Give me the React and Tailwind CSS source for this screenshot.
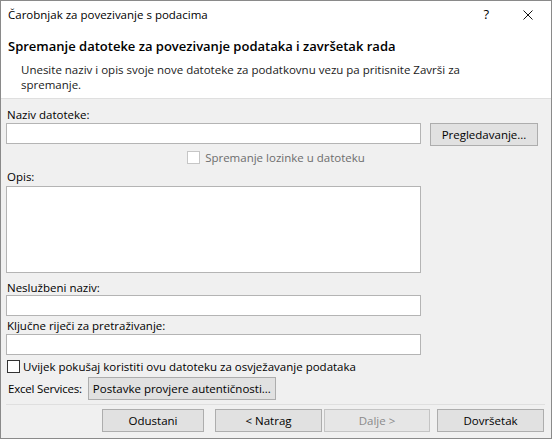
const FONT = "font-['Segoe_UI','Open_Sans',sans-serif]";

function TextBox({ h = 'h-[21px]' }) {
  return <div className={`w-[415px] shrink-0 ${h} bg-white border border-[#b4b4b4]`} />;
}

function Btn({ children, w, disabled, className = '' }) {
  return (
    <div
      className={`${w} h-[23px] shrink-0 whitespace-nowrap flex items-center justify-center border ${
        disabled ? 'border-[#c4c4c4] bg-[#e6e6e6] text-[#8a8a8a]' : 'border-[#adadad] bg-[#e1e1e1] text-black'
      } ${className}`}
    >
      {children}
    </div>
  );
}

function Check({ disabled }) {
  return (
    <div
      className={`w-[13px] h-[13px] shrink-0 bg-white border ${disabled ? 'border-[#c6c6c6]' : 'border-[#333333]'}`}
    />
  );
}

export default function App() {
  return (
    <div className={`w-[552px] h-[439px] border border-[#8a8a8a] bg-[#f0f0f0] flex flex-col text-[11.5px] leading-[15px] text-black ${FONT}`}>
      {/* header */}
      <div className="bg-white border-b border-[#dfdfdf] pb-[6px]">
        <div className="h-[27px] flex items-center pl-[7px]">
          <span>Čarobnjak za povezivanje s podacima</span>
          <span className="ml-auto mr-[34px] text-[13px]">?</span>
          <svg width="10" height="10" viewBox="0 0 10 10" className="mr-[18px]">
            <path d="M0.5 0.5 L9.5 9.5 M9.5 0.5 L0.5 9.5" stroke="#111" strokeWidth="1" />
          </svg>
        </div>
        <div className="mt-[10px] pl-[7px] text-[13px] leading-[17px] font-semibold">
          Spremanje datoteke za povezivanje podataka i završetak rada
        </div>
        <div className="mt-[7px] pl-[20px] pr-[60px] text-[#1a1a1a]">
          Unesite naziv i opis svoje nove datoteke za podatkovnu vezu pa pritisnite Završi za spremanje.
        </div>
      </div>

      {/* body */}
      <div className="flex flex-col px-[5px]">
        <div className="mt-[8px] pl-[1px]">Naziv datoteke:</div>
        <div className="mt-[1px] flex items-start">
          <TextBox />
          <Btn w="w-[108px]" className="ml-[9px]">Pregledavanje...</Btn>
        </div>

        <div className="mt-[4px] h-[15px] flex items-center justify-center gap-[5px] text-[#6d6d6d]">
          <Check disabled />
          <span>Spremanje lozinke u datoteku</span>
        </div>

        <div className="mt-[4px] pl-[1px]">Opis:</div>
        <div className="mt-[2px]">
          <TextBox h="h-[87px]" />
        </div>

        <div className="mt-[7px] pl-[1px]">Neslužbeni naziv:</div>
        <TextBox />

        <div className="mt-[2px] pl-[1px]">Ključne riječi za pretraživanje:</div>
        <div className="mt-[1px]">
          <TextBox />
        </div>

        <div className="mt-[4px] h-[15px] flex items-center gap-[3px] pl-[1px]">
          <Check />
          <span className="whitespace-nowrap">Uvijek pokušaj koristiti ovu datoteku za osvježavanje podataka</span>
        </div>

        <div className="mt-[3px] flex items-center">
          <span className="pl-[2px] whitespace-nowrap tracking-[-0.2px]">Excel Services:</span>
          <Btn w="w-[188px]" className="ml-[6px]">Postavke provjere autentičnosti...</Btn>
        </div>

        <div className="mt-[4px] h-px bg-[#dfdfdf] mr-[1px]" />

        <div className="mt-[4px] flex pl-[96px]">
          <Btn w="w-[102px]">Odustani</Btn>
          <Btn w="w-[107px]" className="ml-[11px]">&lt; Natrag</Btn>
          <Btn w="w-[106px]" className="ml-[2px]" disabled>Dalje &gt;</Btn>
          <Btn w="w-[107px]" className="ml-[7px]">Dovršetak</Btn>
        </div>
      </div>
    </div>
  );
}
